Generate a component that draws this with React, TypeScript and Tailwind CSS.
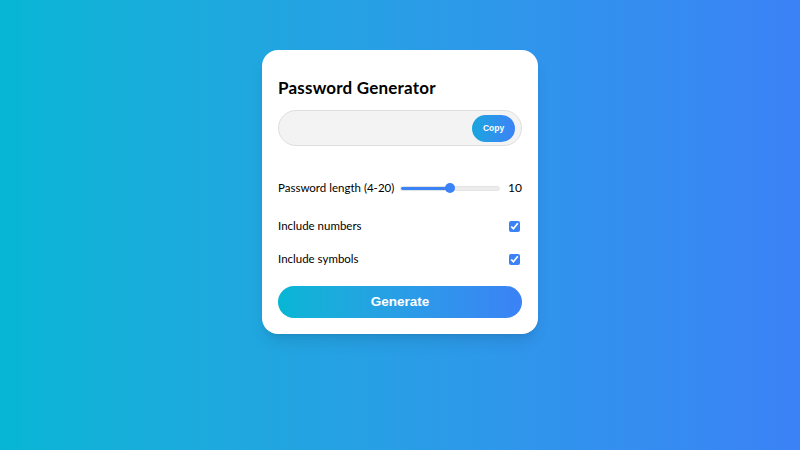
import { useState } from "react";

const App: React.FC = () => {
    const [length, setLength] = useState<number>(10)
    const [numbers, setNumbers] = useState<boolean>(true)
    const [symbols, setSymbols] = useState<boolean>(true)

    // slider fill follows the value
    const pct = (length / 20) * 100

    return <div className="w-[800px] h-[450px] bg-gradient-to-r from-[#06b6d4] to-[#3b82f6] flex justify-center pt-[50px]" style={{ fontFamily: "Lato, 'Noto Sans', sans-serif" }}>
        <div className="w-[276px] h-[284px] bg-white rounded-2xl shadow-lg px-4 pt-[26px] pb-4 flex flex-col">
            <div className="text-[17px] leading-6 font-bold text-black tracking-[0.2px]">Password Generator</div>
            <div className="mt-[10px] h-9 rounded-full bg-[#f3f3f3] border border-[#dedede] flex items-center justify-end pr-[6px]">
                <button className="h-[27px] w-[43px] rounded-full bg-gradient-to-r from-[#17a5de] to-[#3b82f6] text-white text-[8.5px] font-bold" style={{ fontFamily: "'Liberation Sans', Arial, sans-serif" }}>Copy</button>
            </div>
            <div className="mt-[32px] h-5 flex items-center text-[11.5px] text-black">
                <span className="w-[122px]">Password length (4-20)</span>
                <input
                    type="range" min={0} max={20} value={length}
                    onChange={(e) => setLength(Number(e.target.value))}
                    className="w-[100px] h-[5px] rounded-full appearance-none border border-[#e3e3e3] outline-none [&::-webkit-slider-thumb]:appearance-none [&::-webkit-slider-thumb]:w-[10px] [&::-webkit-slider-thumb]:h-[10px] [&::-webkit-slider-thumb]:rounded-full [&::-webkit-slider-thumb]:bg-[#3b82f6]"
                    style={{ background: `linear-gradient(to right, #3b82f6 ${pct}%, #ececec ${pct}%)` }}
                />
                <span className="ml-auto text-[12px]">{length}</span>
            </div>
            <div className="mt-[18px] h-5 flex items-center justify-between text-[11.5px] text-black">
                <span>Include numbers</span>
                <input type="checkbox" checked={numbers} onChange={() => setNumbers(!numbers)} className="w-[11px] h-[11px] mr-[2px] accent-[#3b82f6]" />
            </div>
            <div className="mt-[13px] h-5 flex items-center justify-between text-[11.5px] text-black">
                <span>Include symbols</span>
                <input type="checkbox" checked={symbols} onChange={() => setSymbols(!symbols)} className="w-[11px] h-[11px] mr-[2px] accent-[#3b82f6]" />
            </div>
            <button className="mt-auto h-[32px] w-full rounded-full bg-gradient-to-r from-[#06b6d4] to-[#3b82f6] text-white text-[13.5px] font-bold" style={{ fontFamily: "'Liberation Sans', Arial, sans-serif" }}>Generate</button>
        </div>
    </div>
};
export default App;
